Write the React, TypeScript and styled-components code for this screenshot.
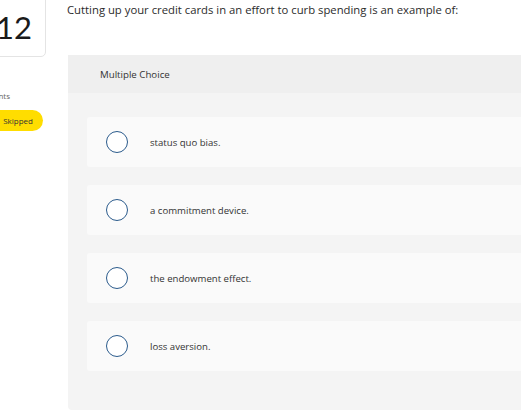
import React from "react";
import styled, { createGlobalStyle } from "styled-components";

const Global = createGlobalStyle`
  html, body { margin: 0; padding: 0; background: #ffffff; overflow: hidden; }
  body { font-family: "Open Sans", Lato, sans-serif; color: #333; }
  * { box-sizing: border-box; }
`;

const Page = styled.div`
  display: flex;
  align-items: flex-start;
  width: 521px;
  height: 413px;
  overflow: hidden;
`;

const Sidebar = styled.aside`
  flex: 0 0 90px;
  margin-left: -44px;
  display: flex;
  flex-direction: column;
  align-items: flex-end;
`;

const NumberCard = styled.div`
  width: 90px;
  height: 58px;
  margin-top: -1px;
  border: 1px solid #e4e4e4;
  border-radius: 0 0 5px 0;
  background: #fff;
  display: flex;
  align-items: center;
  justify-content: flex-end;
  padding: 0 13px 2px 0;
  font-family: Lato, sans-serif;
  font-size: 31px;
  color: #1a1a1a;
  line-height: 1;
`;

const SideLabel = styled.div`
  margin-top: 33px;
  padding-right: 36px;
  font-size: 8px;
  color: #666;
  line-height: 12px;
`;

const StatusPill = styled.div`
  margin-top: 8px;
  margin-right: 3px;
  height: 21px;
  padding: 0 10px 0 20px;
  border-radius: 11px;
  background: #ffdd00;
  color: #333;
  font-size: 8px;
  display: flex;
  align-items: center;
`;

const Main = styled.main`
  flex: 1;
  margin-left: 21px;
  display: flex;
  flex-direction: column;
`;

const Question = styled.p`
  margin: 2px 0 0 0;
  font-size: 11.3px;
  line-height: 15px;
  color: #2b2b2b;
  white-space: nowrap;
`;

const Panel = styled.section`
  margin: 38px 0 0 1px;
  width: 470px;
  background: #f4f4f4;
  border-radius: 0 0 0 4px;
`;

const PanelHeader = styled.div`
  height: 38px;
  background: #efefef;
  display: flex;
  align-items: center;
  padding-left: 32px;
  font-size: 9.7px;
  color: #333;
`;

const OptionList = styled.div`
  display: flex;
  flex-direction: column;
  gap: 18px;
  padding: 24px 0 39px 19px;
`;

const Option = styled.label`
  height: 50px;
  background: #fafafa;
  border-radius: 3px 0 0 3px;
  display: flex;
  align-items: center;
  gap: 22px;
  padding-left: 19px;
  font-size: 9.6px;
  color: #333;
`;

const Radio = styled.span`
  width: 22px;
  height: 22px;
  border-radius: 50%;
  border: 1.5px solid #2b5b8c;
  background: #fff;
  flex: 0 0 auto;
`;

const options = [
  "status quo bias.",
  "a commitment device.",
  "the endowment effect.",
  "loss aversion.",
];

export default function App() {
  return (
    <>
      <Global />
      <Page>
        <Sidebar>
          <NumberCard>12</NumberCard>
          <SideLabel>Points</SideLabel>
          <StatusPill>Skipped</StatusPill>
        </Sidebar>
        <Main>
          <Question>
            Cutting up your credit cards in an effort to curb spending is an example of:
          </Question>
          <Panel>
            <PanelHeader>Multiple Choice</PanelHeader>
            <OptionList>
              {options.map((o) => (
                <Option key={o}>
                  <Radio />
                  <span>{o}</span>
                </Option>
              ))}
            </OptionList>
          </Panel>
        </Main>
      </Page>
    </>
  );
}
